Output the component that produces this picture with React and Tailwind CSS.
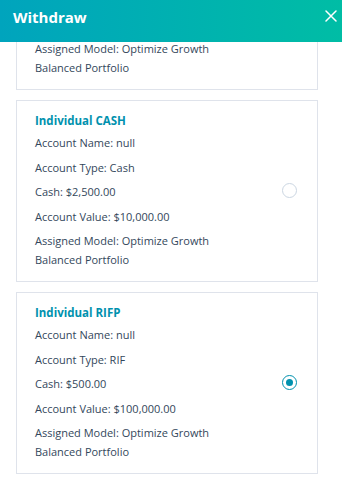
const accounts = [
  {
    title: 'Individual TFSA',
    name: 'null',
    type: 'TFSA',
    cash: '$1,000.00',
    value: '$25,000.00',
    selected: false,
  },
  {
    title: 'Individual CASH',
    name: 'null',
    type: 'Cash',
    cash: '$2,500.00',
    value: '$10,000.00',
    selected: false,
  },
  {
    title: 'Individual RIFP',
    name: 'null',
    type: 'RIF',
    cash: '$500.00',
    value: '$100,000.00',
    selected: true,
  },
];

function Radio({ checked }) {
  if (checked) {
    return (
      <span className="flex h-[15px] w-[15px] items-center justify-center rounded-full border-[1.5px] border-[#0091ae]">
        <span className="h-[7px] w-[7px] rounded-full bg-[#0091ae]" />
      </span>
    );
  }
  return <span className="h-[15px] w-[15px] rounded-full border border-[#cbd6e2] bg-white" />;
}

function AccountCard({ account }) {
  return (
    <div className="flex items-center justify-between border border-[#dfe3eb] bg-white pb-[12px] pl-[18px] pr-[20px] pt-[10px]">
      <div className="flex flex-col text-[11px] leading-[19px] text-[#33475b]">
        <p className="mb-[3px] text-[11.5px] font-bold text-[#0091ae]">{account.title}</p>
        <div className="flex flex-col gap-[5.5px]">
          <p>Account Name: {account.name}</p>
          <p>Account Type: {account.type}</p>
          <p>Cash: {account.cash}</p>
          <p>Account Value: {account.value}</p>
          <p>
            Assigned Model: Optimize Growth
            <br />
            Balanced Portfolio
          </p>
        </div>
      </div>
      <Radio checked={account.selected} />
    </div>
  );
}

export default function App() {
  return (
    <div className="flex h-[482px] w-[342px] flex-col overflow-hidden bg-white font-['Open_Sans',sans-serif]">
      <div className="flex h-[42px] shrink-0 items-start justify-between bg-[linear-gradient(90deg,#00a4bd,#00bda5)] pl-[13px] pr-[5px] pt-[5px] text-white">
        <h1 className="text-[15px] font-bold leading-[24px]">Withdraw</h1>
        <svg width="12" height="12" viewBox="0 0 12 12" className="mt-[5px]" fill="none" stroke="white" strokeWidth="1.5" strokeLinecap="round">
          <path d="M1 1l10 10M11 1L1 11" />
        </svg>
      </div>
      <div className="flex-1 overflow-hidden">
        <div className="-mt-[134px] ml-4 flex w-[302px] flex-col gap-[10px]">
          {accounts.map((a) => (
            <AccountCard key={a.title} account={a} />
          ))}
        </div>
      </div>
    </div>
  );
}
